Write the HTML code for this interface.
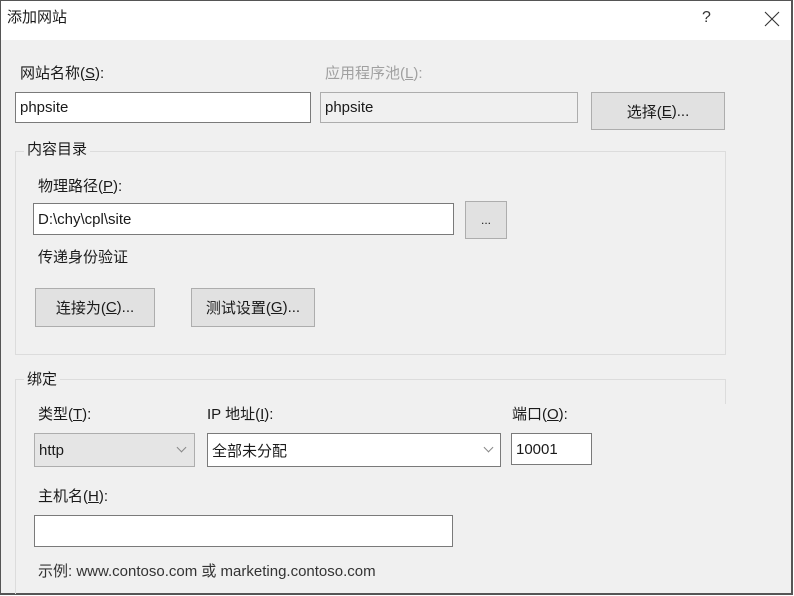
<!DOCTYPE html>
<html><head><meta charset="utf-8"><style>
*{box-sizing:border-box;margin:0;padding:0}
body{width:794px;height:596px;overflow:hidden;background:#fff;font-family:"Liberation Sans","Noto Sans CJK SC",sans-serif;font-size:15px;color:#1a1a1a;position:relative}
.win{position:absolute;left:0;top:0;width:793px;height:595px;border:1px solid #555;border-right:2px solid #555;border-bottom:2px solid #555;background:#f0f0f0}
.title{position:absolute;left:0;top:0;width:100%;height:39px;background:#fff}
.a{position:absolute;white-space:nowrap;line-height:20px}
.in{position:absolute;background:#fff;border:1px solid #7a7a7a;padding-left:4px;display:flex;align-items:center;white-space:nowrap}
.btn{position:absolute;background:#e1e1e1;border:1px solid #adadad;display:flex;align-items:center;justify-content:center;white-space:nowrap}
.grp{position:absolute;border:1px solid #dcdcdc}
.lg{position:absolute;background:#f0f0f0;padding:0 3px;line-height:20px}
u{text-decoration:underline}
.chev{position:absolute;width:7px;height:7px;border-right:1px solid #888;border-bottom:1px solid #888;transform:rotate(45deg)}
</style></head><body>
<div class="win">
<div class="title"></div>
</div>
<div class="a" style="left:7px;top:8px;font-size:15px">添加网站</div>
<div class="a" style="left:702px;top:8px;font-size:16px;color:#333">?</div>
<svg style="position:absolute;left:764px;top:11px" width="16" height="16" viewBox="0 0 16 16"><path d="M1 1L15 15M15 1L1 15" stroke="#333" stroke-width="1.1" fill="none"/></svg>

<div class="a" style="left:20px;top:64px">网站名称(<u>S</u>):</div>
<div class="in" style="left:15px;top:92px;width:296px;height:31px">phpsite</div>
<div class="a" style="left:325px;top:64px;color:#a0a0a0">应用程序池(<u>L</u>):</div>
<div class="in" style="left:320px;top:92px;width:258px;height:31px;background:#f0f0f0;border-color:#adadad">phpsite</div>
<div class="btn" style="left:591px;top:92px;width:134px;height:38px">选择(<u>E</u>)...</div>

<div class="grp" style="left:15px;top:151px;width:711px;height:204px"></div>
<div class="lg" style="left:24px;top:140px">内容目录</div>
<div class="a" style="left:38px;top:177px">物理路径(<u>P</u>):</div>
<div class="in" style="left:33px;top:203px;width:421px;height:32px">D:\chy\cpl\site</div>
<div class="btn" style="left:465px;top:201px;width:42px;height:38px;font-size:12px">...</div>
<div class="a" style="left:38px;top:248px">传递身份验证</div>
<div class="btn" style="left:35px;top:288px;width:120px;height:39px">连接为(<u>C</u>)...</div>
<div class="btn" style="left:191px;top:288px;width:124px;height:39px">测试设置(<u>G</u>)...</div>

<div style="position:absolute;left:15px;top:379px;width:711px;height:1px;background:#dcdcdc"></div>
<div style="position:absolute;left:15px;top:379px;width:1px;height:215px;background:#dcdcdc"></div>
<div style="position:absolute;left:725px;top:379px;width:1px;height:25px;background:#dcdcdc"></div>
<div class="lg" style="left:24px;top:370px">绑定</div>

<div class="a" style="left:38px;top:405px">类型(<u>T</u>):</div>
<div class="in" style="left:34px;top:433px;width:161px;height:34px;background:#e5e5e5;border-color:#adadad">http</div>
<div class="chev" style="left:178px;top:444px"></div>
<div class="a" style="left:207px;top:405px">IP 地址(<u>I</u>):</div>
<div class="in" style="left:207px;top:433px;width:294px;height:34px">全部未分配</div>
<div class="chev" style="left:485px;top:444px"></div>
<div class="a" style="left:512px;top:405px">端口(<u>O</u>):</div>
<div class="in" style="left:511px;top:433px;width:81px;height:32px">10001</div>

<div class="a" style="left:38px;top:487px">主机名(<u>H</u>):</div>
<div class="in" style="left:34px;top:515px;width:419px;height:32px"></div>
<div class="a" style="left:38px;top:562px;color:#333">示例: www.contoso.com 或 marketing.contoso.com</div>
</body></html>
